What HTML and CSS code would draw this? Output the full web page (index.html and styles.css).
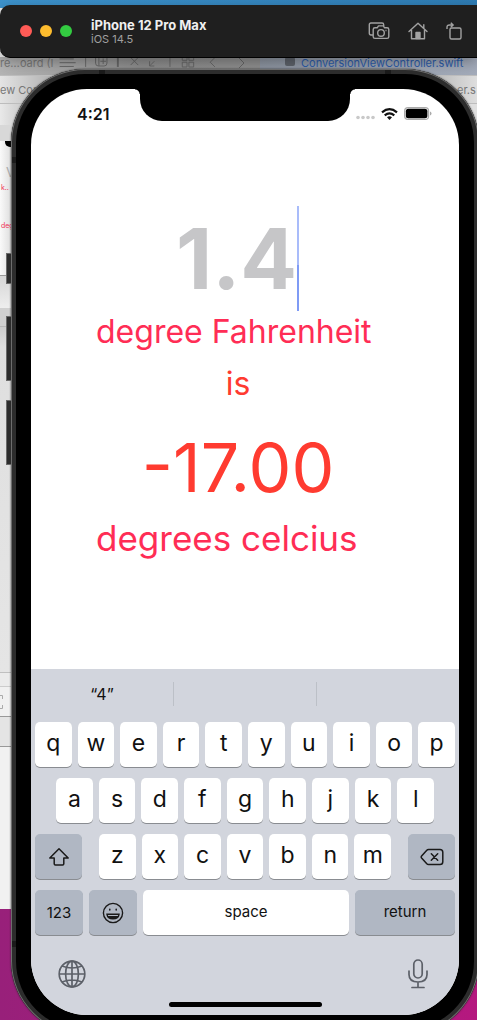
FILE: index.html
```html
<!DOCTYPE html>
<html lang="en">
<head>
<meta charset="utf-8">
<meta name="viewport" content="width=device-width, initial-scale=1">
<title>iPhone 12 Pro Max – iOS 14.5</title>
<link rel="stylesheet" href="styles.css">
</head>
<body>
<div class="desktop">

  <div class="ide" aria-hidden="true">
    <div class="ide-tabs">
      <span class="ide-crumb">re…oard (I</span>
      <svg class="ide-tools" viewBox="0 0 190 18" fill="none" stroke="#666" stroke-width="1">
        <path d="M8 1.500h15M8 5.500h17M8 9.500h15M35.500 0v10M46 0v6q0 3 3 3h6q3 0 3-3V0M49.500 0v9M54 1v6M51 4h6M83 0l8 8M91 0l-8 8M103 4v5h5M103 9l5-5M112 0l3-1M124.500 0v10M137.500-2h5v5h-5zM144.500-2h5v5h-5zM137.500 5h5v5h-5zM144.500 5h5v5h-5zM172 0l-5 5 5 5"/>
        <path d="M69.500 0v10" stroke-width="2"/>
      </svg>
      <svg class="ide-next" viewBox="0 0 8 12" fill="none" stroke="#666"><path d="M1 1l5 5-5 5"/></svg>
      <span class="ide-file"><i class="swift"></i>ConversionViewController.swift</span>
    </div>
    <div class="ide-path"><span>ew Con</span><span class="path-end">er.s</span></div>
    <div class="ide-bar"></div>
    <div class="ide-canvas">
      <span class="mini-notch"></span>
      <span class="mini-value">V</span>
      <span class="mini-text">k..</span>
      <span class="mini-text">deg</span>
    </div>
    <div class="ide-shade"></div>
    <div class="ide-strip"></div>
    <div class="ide-area"></div>
    <div class="ide-row"></div>
    <div class="ide-row ide-tall"><svg class="bracket" viewBox="0 0 4 16" fill="none" stroke="#aaa"><path d="M0 1.500h2.500V5M2.500 11v3.500H0"/></svg></div>
    <div class="ide-row ide-tall ide-dim"></div>
  </div>

  <header class="titlebar">
    <div class="lights">
      <button class="light close" aria-label="Close"></button>
      <button class="light minimize" aria-label="Minimize"></button>
      <button class="light maximize" aria-label="Zoom"></button>
    </div>
    <div class="device">
      <h1 class="device-name">iPhone 12 Pro Max</h1>
      <p class="device-os">iOS 14.5</p>
    </div>
    <div class="actions">
      <button class="action" aria-label="Screenshot">
        <svg width="22" height="18" viewBox="0 0 22 18" fill="none" stroke="#a2a2a2" stroke-width="1.400" stroke-linejoin="round"><path d="M5 13H3q-1.700 0-1.700-1.700V2.700Q1.300 1 3 1h11q1.700 0 1.700 1.700V4"/><path d="M7 5.800h2.200l1.300-1.900h4.800l1.300 1.900H19q1.800 0 1.800 1.700v7.200q0 1.700-1.800 1.700H7q-1.800 0-1.800-1.700V7.500q0-1.700 1.800-1.700z"/><circle cx="13" cy="10.900" r="3.300"/><path d="M17.500 8.500h1"/></svg>
      </button>
      <button class="action" aria-label="Home">
        <svg width="20" height="18" viewBox="0 0 20 18" fill="none" stroke="#a2a2a2" stroke-width="1.400" stroke-linejoin="round" stroke-linecap="round"><path d="M1 9.500L10 1.200l9 8.300M3.500 8v8.800h13V8M15.800 6V2.800"/><path d="M8 10.500h4v6H8z" fill="#a2a2a2"/></svg>
      </button>
      <button class="action" aria-label="Rotate">
        <svg width="16" height="18" viewBox="0 0 16 18" fill="none" stroke="#a2a2a2" stroke-width="1.400" stroke-linejoin="round"><rect x="4" y="6" width="11" height="11" rx="1.500"/><path d="M1 7V5.500Q1 3 3.500 3H7M4.800.8L7.200 3 4.800 5.200"/></svg>
      </button>
    </div>
  </header>

  <main class="phone">
    <span class="side mute"></span>
    <span class="side up"></span>
    <span class="side down"></span>
    <span class="band band-tl"></span>
    <span class="band band-tr"></span>
    <span class="band band-l"></span>
    <span class="band band-lb"></span>

    <div class="screen">
      <span class="notch"></span>
      <div class="status">
        <time class="clock">4:21</time>
        <div class="signals">
          <svg width="19" height="5" viewBox="0 0 19 5" fill="#c9c9c9"><circle cx="2" cy="2.500" r="1.800"/><circle cx="7" cy="2.500" r="1.800"/><circle cx="12" cy="2.500" r="1.800"/><circle cx="17" cy="2.500" r="1.800"/></svg>
          <svg width="17" height="12" viewBox="0 0 17 12" fill="none" stroke="#111" stroke-width="2.200"><path d="M1 4.300Q8.500-2 16 4.300M3.700 7.300q4.800-3.900 9.600 0"/><path d="M8.500 12L6 9.300q2.500-1.900 5 0z" fill="#111" stroke="none"/></svg>
          <svg width="28" height="13" viewBox="0 0 28 13"><rect x=".6" y=".6" width="24" height="11.800" rx="3.500" fill="#fff" stroke="#aaa" stroke-width="1.200"/><rect x="1.800" y="1.800" width="21.600" height="9.400" rx="2.500" fill="#000"/><path d="M26 4.500q1.500.4 1.500 2t-1.500 2z" fill="#aaa"/></svg>
        </div>
      </div>

      <section class="converter">
        <div class="field">
          <input class="degrees" id="degrees" type="text" inputmode="decimal" placeholder="1.4">
          <span class="caret"></span>
        </div>
        <label class="unit from" for="degrees">degree Fahrenheit</label>
        <p class="is">is</p>
        <output class="result" for="degrees">-17.00</output>
        <p class="unit to">degrees celcius</p>
      </section>

      <section class="keyboard" aria-label="Keyboard">
        <div class="suggestions">
          <button class="suggestion">“4”</button>
          <button class="suggestion" aria-label="Empty suggestion"></button>
          <button class="suggestion" aria-label="Empty suggestion"></button>
        </div>
        <div class="keys">
          <div class="row">
            <button class="key">q</button><button class="key">w</button><button class="key">e</button><button class="key">r</button><button class="key">t</button><button class="key">y</button><button class="key">u</button><button class="key">i</button><button class="key">o</button><button class="key">p</button>
          </div>
          <div class="row inset">
            <button class="key">a</button><button class="key">s</button><button class="key">d</button><button class="key">f</button><button class="key">g</button><button class="key">h</button><button class="key">j</button><button class="key">k</button><button class="key">l</button>
          </div>
          <div class="row">
            <button class="key fn" aria-label="Shift"><svg width="22" height="20" viewBox="0 0 22 20" fill="none" stroke="#1a1a1a" stroke-width="1.500" stroke-linejoin="round"><path d="M11 1.800L1.800 11h4.400v5.800q0 1.200 1.200 1.200h7.200q1.200 0 1.200-1.200V11h4.400z"/></svg></button>
            <div class="row letters">
              <button class="key">z</button><button class="key">x</button><button class="key">c</button><button class="key">v</button><button class="key">b</button><button class="key">n</button><button class="key">m</button>
            </div>
            <button class="key fn" aria-label="Delete"><svg width="24" height="18" viewBox="0 0 24 18" fill="none" stroke="#1a1a1a" stroke-width="1.500" stroke-linejoin="round" stroke-linecap="round"><path d="M8.500 1.500H20q2.800 0 2.800 2.800v9.400q0 2.800-2.800 2.800H8.500q-1 0-1.700-.8L1.600 10q-.8-1 0-2l5.200-5.700q.7-.8 1.700-.8z"/><path d="M11.300 5.800l6.400 6.400M17.700 5.800l-6.400 6.400"/></svg></button>
          </div>
          <div class="row bottom">
            <button class="key fn word">123</button>
            <button class="key fn" aria-label="Emoji"><svg width="22" height="22" viewBox="0 0 22 22" fill="none" stroke="#1a1a1a" stroke-width="1.400"><circle cx="11" cy="11" r="9.600"/><path d="M5 12.300h12q-.6 4.500-6 4.500t-6-4.500z"/><path d="M5.500 14h11q-1.500 3-5.500 3t-5.500-3z" fill="#1a1a1a" stroke="none"/><ellipse cx="7.800" cy="7.700" rx=".8" ry="1.100" fill="#1a1a1a" stroke="none"/><ellipse cx="14.200" cy="7.700" rx=".8" ry="1.100" fill="#1a1a1a" stroke="none"/></svg></button>
            <button class="key word space">space</button>
            <button class="key fn word return">return</button>
          </div>
        </div>
        <div class="dock">
          <button class="tool" aria-label="Next keyboard"><svg width="28" height="28" viewBox="0 0 28 28" fill="none" stroke="#5c6068" stroke-width="1.700"><circle cx="14" cy="14" r="12.800"/><ellipse cx="14" cy="14" rx="6.400" ry="12.800"/><path d="M14 1v26M1 14h26M4 6q10 4 20 0M4 22q10-4 20 0"/></svg></button>
          <button class="tool" aria-label="Dictation"><svg width="20" height="30" viewBox="0 0 20 30" fill="none" stroke="#5c6068" stroke-width="1.700" stroke-linecap="round"><rect x="5.800" y="1" width="8.400" height="18" rx="4.200"/><path d="M1 12v3.500q0 7.500 9 7.500t9-7.500V12M10 23v5M4 28.500h12"/></svg></button>
        </div>
        <span class="home-bar"></span>
      </section>
    </div>
  </main>
</div>
</body>
</html>
```
FILE: styles.css
```css
* { box-sizing: border-box; }

body {
  margin: 0;
  height: 100vh;
  overflow: hidden;
  font-family: Inter, "Liberation Sans", sans-serif;
}

h1, p { margin: 0; }

button {
  margin: 0;
  padding: 0;
  border: 0;
  background: none;
  font-family: inherit;
  color: #111;
}

svg { display: block; }

.desktop {
  position: relative;
  min-height: 100vh;
  padding-top: 5px;
  overflow: hidden;
  background: linear-gradient(90deg, #3d93cd, #2f7db5) top / 100% 30px no-repeat,
    linear-gradient(90deg, #98207a, #b5187f);
}

/* Editor window behind the simulator */
.ide {
  position: absolute;
  inset: 8px 0 auto;
  height: 901px;
  padding-top: 49px;
  background: #f1f1f1;
  font-size: 11px;
  color: #777;
  white-space: nowrap;
}

.ide-tabs {
  display: flex;
  height: 18px;
  overflow: hidden;
  background: linear-gradient(90deg, #b4b4b4, #8c8c8c 30%, #929292 80%, #9ba3b0);
  line-height: 12px;
}

.ide-crumb { flex: 0 0 56px; }
.ide-tools { flex: 0 0 180px; height: 18px; margin-left: -4px; }
.ide-next { flex: 0 0 8px; height: 12px; margin-left: 6px; }

.ide-file {
  display: flex;
  gap: 6px;
  flex: 1;
  margin-left: 14px;
  padding-left: 25px;
  background: linear-gradient(90deg, #8c94a0, #a3abba);
  color: #2c5ba8;
}

.swift { width: 10px; height: 9px; background: #5d626a; border-radius: 2px; }

.ide-path {
  display: flex;
  justify-content: space-between;
  height: 29px;
  border: solid #bdbdbd;
  border-width: 1px 0;
  background: linear-gradient(90deg, #e4e4e4, #b5b5b5 10%, #b5b5b5 90%, #dedede);
  line-height: 29px;
}

.path-end { width: 20px; }

.ide-bar {
  height: 37px;
  border-bottom: 16px solid #d8d8d8;
  background: linear-gradient(90deg, #e9e9e9, #cfcfcf 4%, #e0e0e0);
}

.ide-canvas {
  position: relative;
  display: flex;
  flex-direction: column;
  height: 135px;
  border-bottom: 1px solid #999;
  background: linear-gradient(90deg, #fafafa, #dedede 11px);
}

.mini-notch {
  width: 8px;
  height: 6px;
  margin-left: 5px;
  border-radius: 0 0 0 5px;
  background: #000;
}

.mini-value { margin: 17px 0 4px 6px; font-size: 13px; line-height: 16px; color: #aaa; }
.mini-text { padding-left: 1px; font-size: 7px; line-height: 8px; margin-bottom: 30px; color: #ee3357; }

.ide-shade { height: 32px; background: linear-gradient(#d6d6d6, #eeeeee); }
.ide-strip { height: 19px; border-bottom: 1px solid #b8b8b8; background: #d0d0d0; }
.ide-area {
  height: 346px;
  border-bottom: 1px solid #c0c0c0;
  background: linear-gradient(#cdcdcd, #dfdfdf 20px, #e5e5e5);
}
.ide-row { height: 14px; border-bottom: 1px solid #ccc; background: #ebebeb; }
.ide-tall { height: 30px; padding-top: 7px; border-color: #999; background: #f0f0f0; }
.ide-dim { background: #e4e4e4; }
.bracket { width: 4px; height: 16px; }

/* Simulator title bar */
.titlebar {
  position: relative;
  display: flex;
  align-items: center;
  height: 53px;
  padding: 0 15px 0 20px;
  border-bottom: 1px solid #000;
  border-radius: 10px 0 0 10px;
  background: #1f1f1f;
  box-shadow: 0 4px 14px rgba(0, 0, 0, 0.3);
}

.lights { display: flex; gap: 8px; }
.light { width: 12px; height: 12px; border-radius: 50%; }
.close { background: #ff5b56; }
.minimize { background: #fdbc2e; }
.maximize { background: #33cb41; }

.device { flex: 1; margin-left: 19px; }
.device-name { font-size: 13px; line-height: 16px; font-weight: 700; color: #f0f0f0; }
.device-os { font-size: 11px; line-height: 13px; color: #a0a0a0; }

.actions { display: flex; gap: 18px; }

/* Phone body */
.phone {
  position: relative;
  margin: 11px -2px 0 11px;
  padding: 20px;
  border-radius: 74px;
  background: #000;
  box-shadow: inset 0 0 0 1px #6d6d6d, inset 0 0 0 5px #2c2c2c, 0 0 2px #222;
}

.side {
  position: absolute;
  left: -5px;
  width: 5px;
  height: 65px;
  border: 1px solid #6a6a6a;
  border-right: 0;
  background: #2c2c2c;
}

.mute { top: 184px; height: 31px; }
.up { top: 247px; }
.down { top: 331px; }

.band { position: absolute; width: 6px; height: 4px; background: #1a1a1a; }
.band-tl { top: 1px; left: 88px; }
.band-tr { top: 1px; right: 88px; }
.band-l, .band-lb { left: 1px; width: 4px; height: 6px; }
.band-l { top: 88px; }
.band-lb { top: 872px; }

.screen {
  position: relative;
  overflow: hidden;
  border-radius: 56px;
  background: #fff;
}

.notch {
  position: absolute;
  top: 0;
  left: 50%;
  width: 210px;
  height: 32px;
  margin-left: -105px;
  border-radius: 0 0 22px 22px;
  background: #000;
}

.notch::before,
.notch::after {
  content: "";
  position: absolute;
  top: 0;
  width: 5px;
  height: 5px;
}

.notch::before { right: 100%; background: radial-gradient(circle at 0 100%, transparent 4px, #000 5px); }
.notch::after { left: 100%; background: radial-gradient(circle at 100% 100%, transparent 4px, #000 5px); }

.status {
  display: flex;
  justify-content: space-between;
  align-items: center;
  height: 49px;
  padding: 0 27px 0 46px;
}

.clock { font-size: 16px; font-weight: 600; color: #111; }
.signals { display: flex; align-items: center; gap: 6px; }
.signals svg:first-child { margin-top: 8px; }

/* Converter */
.converter {
  display: flex;
  flex-direction: column;
  align-items: center;
  height: 531px;
  padding-top: 68px;
  color: #ff3b30;
}

.field { display: flex; margin-right: 18px; }

.degrees {
  width: 124px;
  height: 105px;
  padding: 0;
  border: 0;
  outline: 0;
  background: none;
  font: 700 84px/105px Inter, "Liberation Sans", sans-serif;
  text-align: right;
  color: #ff3b30;
}

.degrees::placeholder { color: #c6c6c8; opacity: 1; }

.caret { width: 2px; background: linear-gradient(#a9bcfa 56%, #7f9bf5 56%); }

.unit { align-self: flex-start; margin-left: 65px; color: #ff2d55; white-space: nowrap; }
.from { font-size: 32px; line-height: 42px; }
.is { margin-top: 9px; margin-right: 14px; font-size: 32px; line-height: 44px; }
.result { margin: 19px 14px 0 0; font-size: 68px; line-height: 84px; }
.to { font-size: 35px; line-height: 44px; margin-top: 7px; }

/* Keyboard */
.keyboard { padding-bottom: 8px; background: #d2d5dd; }

.suggestions { display: flex; height: 53px; padding: 13px 0 16px; }
.suggestion { flex: 1; border-left: 1px solid #bcc0c7; font-size: 16px; }
.suggestion:first-child { border-left: 0; }

.keys { display: flex; flex-direction: column; gap: 11px; padding: 0 4px; }
.row { display: flex; gap: 6px; }
.inset { padding: 0 21px; }
.letters { flex: 1; margin: 0 11px; }

.key {
  display: flex;
  flex: 1;
  align-items: center;
  justify-content: center;
  min-width: 0;
  height: 45px;
  padding-bottom: 3px;
  border-radius: 5px;
  background: #fff;
  box-shadow: 0 1px 0 #898c91;
  font-size: 23px;
}

.fn { flex: 0 0 47px; padding-bottom: 0; background: #b0b7c3; }
.bottom .fn { flex-basis: 48px; }
.word { font-size: 15px; }
.space { flex: 1; }
.bottom .return { flex-basis: 100px; padding-bottom: 3px; }

.dock { display: flex; justify-content: space-between; padding: 24px 31px 0 27px; }
.tool { height: 30px; }

.home-bar {
  display: block;
  width: 153px;
  height: 5px;
  margin: 13px auto 0;
  border-radius: 3px;
  background: #000;
}
```
